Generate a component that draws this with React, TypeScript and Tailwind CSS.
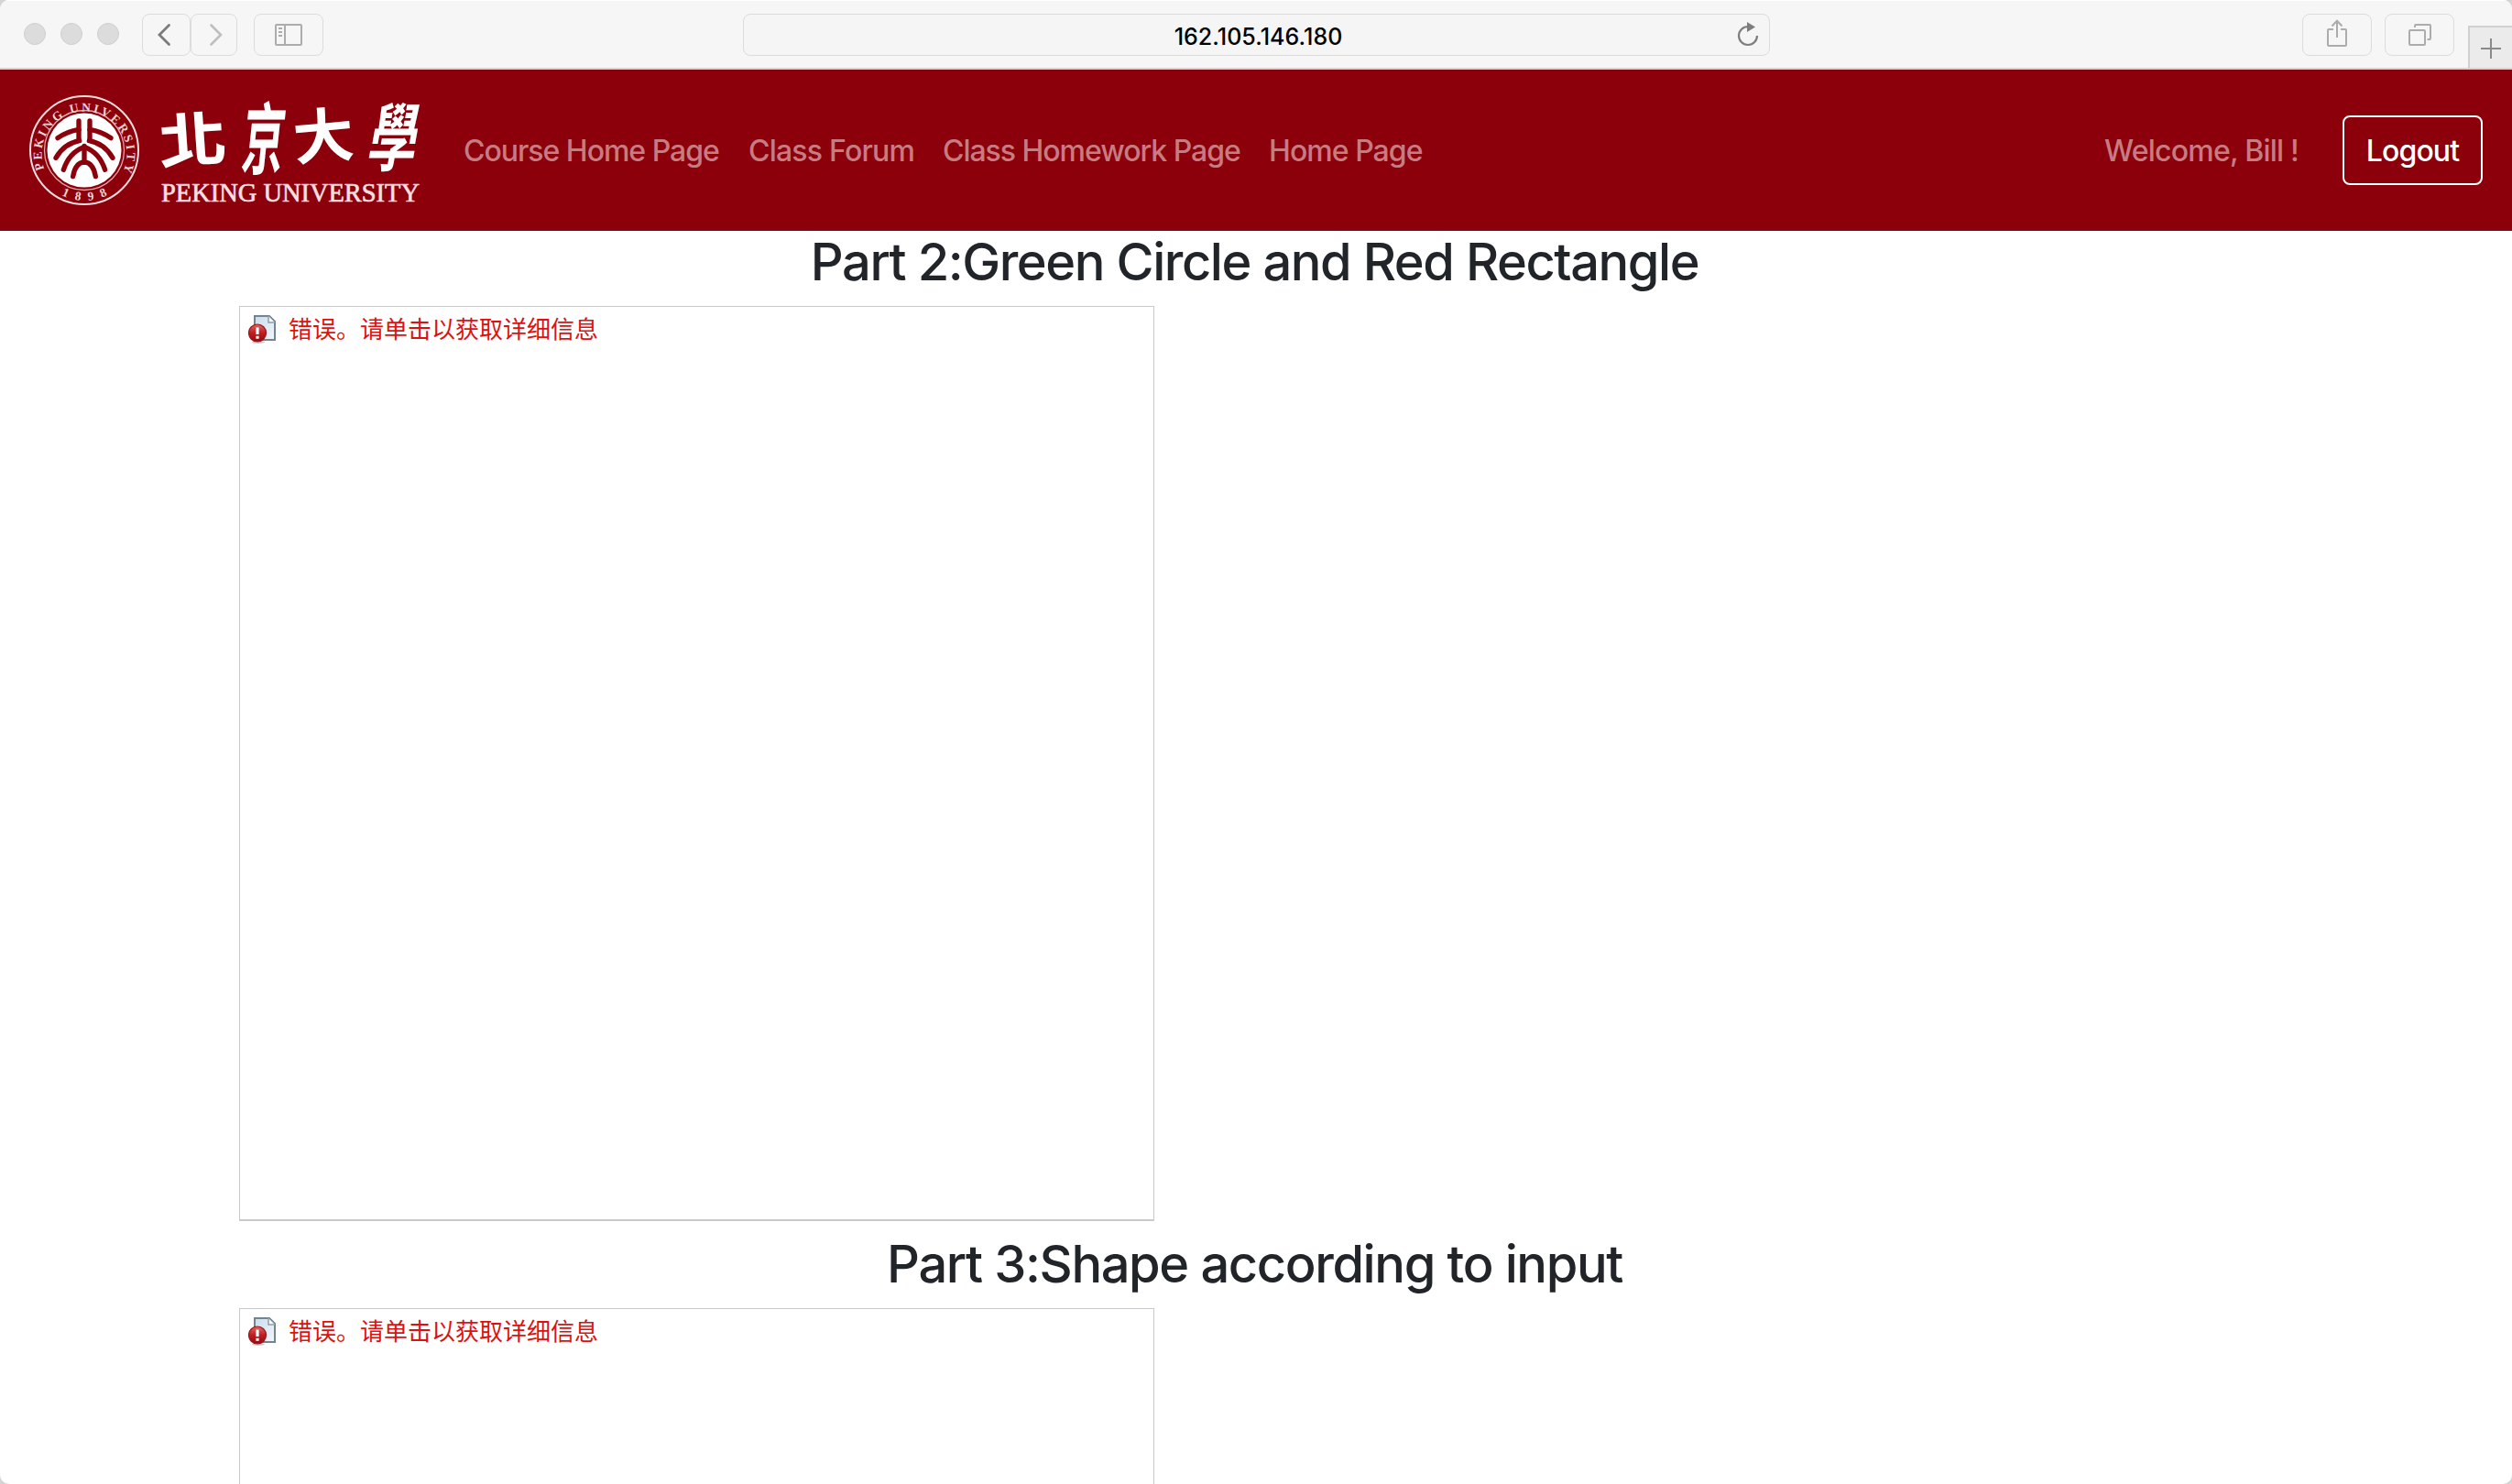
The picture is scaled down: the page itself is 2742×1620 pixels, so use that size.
import type { ReactNode } from "react";

function ToolButton({ className, children }: { className: string; children: ReactNode }) {
  return (
    <button className={`flex h-[46px] items-center justify-center rounded-[8px] border border-[#dcdcdc] bg-[#f6f6f6] ${className}`}>
      {children}
    </button>
  );
}

function Toolbar() {
  return (
    <header className="flex h-[76px] border-b-2 border-[#d2d2d2] border-t border-t-white bg-[#f6f6f6]">
      <div className="flex flex-1 pt-[14px]">
        <div className="ml-[26px] mt-[10px] flex h-6 gap-4">
          <span className="size-6 rounded-full border border-[#cfcfcf] bg-[#dcdcdc]" />
          <span className="size-6 rounded-full border border-[#cfcfcf] bg-[#dcdcdc]" />
          <span className="size-6 rounded-full border border-[#cfcfcf] bg-[#dcdcdc]" />
        </div>
        <div className="ml-[25px] flex">
          <ToolButton className="w-[53px]">
            <svg className="-ml-[6px] -mt-px h-[26px] w-4" viewBox="0 0 16 26" fill="none" stroke="#7b7b7b" strokeWidth="2.8" strokeLinecap="round">
              <path d="M13.5 2.5 3 13l10.500 10.500" />
            </svg>
          </ToolButton>
          <ToolButton className="w-[51px]">
            <svg className="ml-1 -mt-px h-[26px] w-4" viewBox="0 0 16 26" fill="none" stroke="#bebebe" strokeWidth="2.6" strokeLinecap="round">
              <path d="M2.500 2.500 13 13 2.500 23.500" />
            </svg>
          </ToolButton>
        </div>
        <ToolButton className="ml-[18px] w-[76px]">
          <svg className="h-6 w-[30px]" viewBox="0 0 30 24" fill="none" stroke="#acacac" strokeWidth="2">
            <rect x="1" y="1" width="28" height="22" rx="1" />
            <path d="M11 1v22M4 5h4M4 9h4M4 13h4" />
          </svg>
        </ToolButton>
      </div>
      <div className="mt-[14px] flex h-[46px] w-[1121px] items-center rounded-[8px] border border-[#dcdcdc] bg-[#f5f5f5]">
        <div className="w-[40px]" />
        <div className="flex-1 pt-[3px] text-center text-[25px] font-[450] leading-[30px] tracking-[0.05px] text-black">162.105.146.180</div>
        <svg className="mr-[11px] h-[28px] w-[24px]" viewBox="0 0 24 28" fill="none">
          <path d="M12 6a10 10 0 1 0 10 10" stroke="#7d7d7d" strokeWidth="2.200" transform="translate(0 -1)" />
          <path d="M11 0l9 5.500-9 5.500z" fill="#7d7d7d" />
        </svg>
      </div>
      <div className="flex flex-1 justify-end pt-[14px]">
        <ToolButton className="w-[76px]">
          <svg className="-mt-1 h-[31px] w-6" viewBox="0 0 24 31" fill="none" stroke="#acacac" strokeWidth="2">
            <path d="M8 11H3q-1 0-1 1v16q0 1 1 1h18q1 0 1-1V12q0-1-1-1h-5" />
            <path d="M12 20V2M6.500 7.500 12 1.800l5.500 5.700" />
          </svg>
        </ToolButton>
        <ToolButton className="ml-[14px] w-[76px]">
          <svg className="h-6 w-[26px]" viewBox="0 0 26 24" fill="none" stroke="#acacac" strokeWidth="2">
            <rect x="2" y="7" width="17" height="16" rx="1" />
            <path d="M8 4V2q0-1 1-1h15q1 0 1 1v14q0 1-1 1h-2.500" />
          </svg>
        </ToolButton>
        <button className="ml-[15px] mt-[13px] flex h-[46px] w-[48px] items-center justify-center border-l-2 border-t-2 border-[#d0d0d0] bg-[#ebebeb] pt-[2px]">
          <svg className="size-[22px]" viewBox="0 0 22 22" stroke="#8a8a8a" strokeWidth="2">
            <path d="M11 0v22M0 11h22" />
          </svg>
        </button>
      </div>
    </header>
  );
}

function SealArms() {
  return (
    <>
      <path d="M126 42V104" />
      <path d="M126 70Q88 76 57 98" />
      <path d="M128 107Q78 116 51 163" />
      <path d="M142 128Q94 146 76 202" />
    </>
  );
}

function Logo() {
  return (
    <svg className="h-[120px] w-[428px] overflow-visible" viewBox="0 0 428 120" role="img" aria-label="Peking University">
      <defs>
        <path id="ringTop" d="M16.500 80.500A46.500 46.500 0 1 1 103.500 80.500" />
        <path id="ringBottom" d="M29 105.500A55 55 0 0 0 91 105.500" />
      </defs>
      <circle cx="60" cy="60" r="59" fill="none" stroke="#f3dcdd" strokeWidth="2" />
      <circle cx="60" cy="60" r="43.500" fill="none" stroke="#dca9ac" strokeWidth="1.300" />
      <circle cx="60" cy="60" r="40.500" fill="#fff" />
      <g transform="translate(12 14) scale(.3333)" fill="none" stroke="#8b000a" strokeWidth="16" strokeLinecap="round">
        <SealArms />
        <g transform="translate(288 0) scale(-1 1)">
          <SealArms />
        </g>
        <path d="M144 124V178M107 224Q114 180 144 176Q174 180 181 224" />
      </g>
      <g fill="#f0d2d4" className="font-['Liberation_Serif',serif] font-bold" fontSize="13.5">
        <text>
          <textPath href="#ringTop" textLength="182">PEKING UNIVERSITY</textPath>
        </text>
        <text>
          <textPath href="#ringBottom" startOffset="7" textLength="52">1898</textPath>
        </text>
      </g>
      <g fill="#fff" className="font-['Noto_Sans_CJK_TC',sans-serif] font-bold" fontSize="72">
        <text transform="translate(143 75) rotate(-4) scale(1.03 .9)">北</text>
        <text transform="translate(230 79) skewX(-6) scale(.64 1.18)">京</text>
        <text transform="translate(290 71) rotate(-5) scale(.92 .9)">大</text>
        <text transform="translate(367 76) skewX(-10) scale(.74 1.12)">學</text>
      </g>
      <text x="144" y="116" fill="#f6dfe0" className="font-['Liberation_Serif',serif]" fontSize="30" textLength="282" lengthAdjust="spacingAndGlyphs" stroke="#f6dfe0" strokeWidth=".7">
        PEKING UNIVERSITY
      </text>
    </svg>
  );
}

function NavBar() {
  return (
    <nav className="flex h-[176px] items-center bg-[#8b000a] px-8 text-[32px] leading-[48px] text-[#c87c82]">
      <Logo />
      <div className="ml-[46px] flex gap-8 pt-[2px] font-[450]">
        <a className="w-[279px] whitespace-nowrap tracking-[-1.02px]">Course Home Page</a>
        <a className="w-[180px] whitespace-nowrap tracking-[-0.78px]">Class Forum</a>
        <a className="w-[324px] whitespace-nowrap tracking-[-1.03px]">Class Homework Page</a>
        <a className="whitespace-nowrap tracking-[-0.95px]">Home Page</a>
      </div>
      <span className="ml-auto w-[260px] whitespace-nowrap pt-[2px] font-[450] tracking-[-0.78px]">Welcome, Bill !</span>
      <button className="flex h-[76px] w-[153px] items-center justify-center rounded-[8px] border-2 border-white pt-[2px] font-[450] tracking-[-0.9px] text-white">
        Logout
      </button>
    </nav>
  );
}

function ErrorIcon() {
  return (
    <svg className="h-[32px] w-[31px]" viewBox="0 0 31 32">
      <defs>
        <linearGradient id="page" x1="0" y1="0" x2="1" y2="1">
          <stop offset="0" stopColor="#c9dcec" />
          <stop offset="1" stopColor="#f1f6fb" />
        </linearGradient>
        <linearGradient id="ball" x1="0" y1="0" x2="0" y2="1">
          <stop offset="0" stopColor="#d9686a" />
          <stop offset=".5" stopColor="#c31c20" />
          <stop offset="1" stopColor="#8e0d10" />
        </linearGradient>
      </defs>
      <path d="M7 1h16l6 6v20H7z" fill="url(#page)" stroke="#73838f" strokeWidth="2" />
      <path d="M22 1v7h7" fill="#f5f9fc" stroke="#8f9eaa" strokeWidth="1.500" />
      <ellipse cx="11" cy="29.500" rx="7" ry="1.500" fill="#c9c9c9" />
      <circle cx="10" cy="19.500" r="9.500" fill="url(#ball)" stroke="#96191c" strokeWidth="1.200" />
      <path d="M8.400 13.500h3.200v7.500H8.400zM8.400 22.800h3.200v3H8.400z" fill="#fff" />
    </svg>
  );
}

function Frame({ className }: { className: string }) {
  return (
    <div className={`ml-[261px] flex w-[999px] items-start border border-[#c9c9c9] ${className}`}>
      <div className="ml-[9px] mt-[9px]">
        <ErrorIcon />
      </div>
      <p className="ml-[13px] mt-[3px] font-['Noto_Sans_CJK_SC',sans-serif] text-[26px] leading-[39px] text-[#dd1111]">
        错误。请单击以获取详细信息
      </p>
    </div>
  );
}

export default function App() {
  return (
    <div className="h-[1620px] w-[2742px] bg-[#d4d4d4] font-['Inter',sans-serif]">
      <div className="flex h-full flex-col overflow-hidden rounded-[10px] bg-white">
        <Toolbar />
        <NavBar />
        <main className="flex flex-1 flex-col text-[#212529]">
          <h3 className="mb-[14px] pr-[3px] pt-px text-center text-[56px] font-medium leading-[67px] tracking-[-1.44px]">
            Part 2:Green Circle and Red Rectangle
          </h3>
          <Frame className="h-[999px] border-b-2" />
          <h3 className="mb-[14px] mt-[14px] pr-[3px] text-center text-[56px] font-medium leading-[67px] tracking-[-1.38px]">
            Part 3:Shape according to input
          </h3>
          <Frame className="flex-1 border-b-0" />
        </main>
      </div>
    </div>
  );
}
